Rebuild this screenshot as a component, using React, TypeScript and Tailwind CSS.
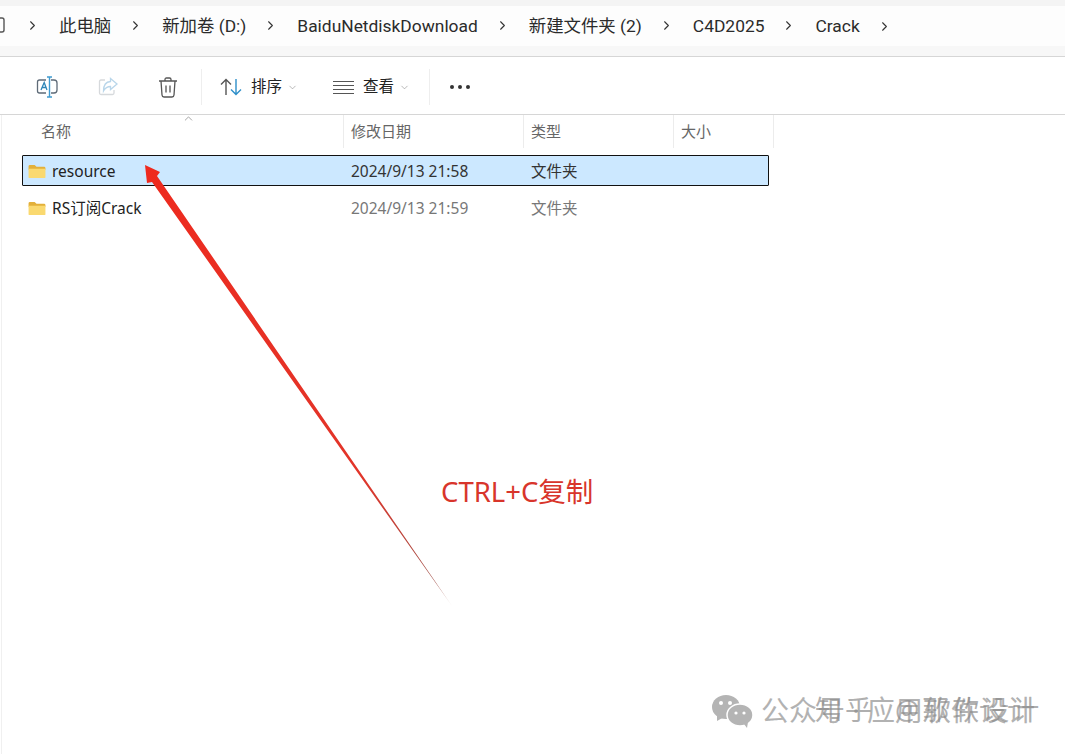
import { ChevronRight, ChevronDown, ChevronUp } from 'lucide-react'

const crumbs = ['此电脑', '新加卷 (D:)', 'BaiduNetdiskDownload', '新建文件夹 (2)', 'C4D2025', 'Crack']

const columns = [
  { label: '修改日期', width: 'w-[180px]' },
  { label: '类型', width: 'w-[150px]' },
  { label: '大小', width: 'w-[100px]' },
]

const files = [
  { name: 'resource', date: '2024/9/13 21:58', selected: true },
  { name: 'RS订阅Crack', date: '2024/9/13 21:59', selected: false },
]

function FolderIcon() {
  return (
    <svg width="18" height="15" viewBox="0 0 19 16" className="shrink-0">
      <path d="M0.5 2.5 Q0.5 1 2 1 H7 L9 3 H17 Q18.5 3 18.5 4.5 V6 H0.5 Z" fill="#e3b03a" />
      <path d="M0.5 5 H18.5 V14 Q18.5 15 17.5 15 H1.5 Q0.5 15 0.5 14 Z" fill="#fad970" />
    </svg>
  )
}

function Divider() {
  return <div className="w-px h-[36px] bg-[#eeeeee] shrink-0" />
}

function Toolbar() {
  return (
    <div className="h-[58px] flex items-center pl-[36px] pt-[3px] bg-white border-b border-[#d6d6d6]">
      <svg width="23" height="22" viewBox="0 0 23 22" fill="none" className="shrink-0">
        <path d="M10 4 H3.5 Q1.5 4 1.5 6 V15 Q1.5 17 3.5 17 H10" stroke="#5f6b78" strokeWidth="1.3" />
        <path d="M15 4 H18 Q21 4 21 7 V14 Q21 17 18 17 H15" stroke="#5f6b78" strokeWidth="1.3" />
        <path d="M5 14 L8.2 6.5 L11 14 M6 11.5 H10.2" stroke="#2f86b8" strokeWidth="1.3" />
        <path d="M13.5 1 V21 M11 1 H16 M11 21 H16" stroke="#3f9bd0" strokeWidth="1.4" />
      </svg>
      <svg width="20" height="20" viewBox="0 0 20 20" fill="none" className="ml-[39px] shrink-0">
        <path d="M7 3 H3 Q1.5 3 1.5 4.5 V16 Q1.5 17.5 3 17.5 H14.5 Q16 17.5 16 16 V13" stroke="#d6d9dc" strokeWidth="1.3" />
        <path d="M12.5 1.5 L19 7 L12.5 12.5 V9.5 Q8 9.5 5.5 14 Q5.5 5 12.5 4.5 Z" stroke="#b9d6ea" strokeWidth="1.3" />
      </svg>
      <svg width="20" height="21" viewBox="0 0 20 21" fill="none" className="ml-[40px] shrink-0">
        <path d="M1 4 H19 M7 4 V2.5 Q7 1 8.5 1 H11.5 Q13 1 13 2.5 V4" stroke="#555555" strokeWidth="1.3" />
        <path d="M3 4 L4 18 Q4.2 20 6 20 H14 Q15.8 20 16 18 L17 4" stroke="#555555" strokeWidth="1.3" />
        <path d="M8 8.5 V15.5 M12 8.5 V15.5" stroke="#555555" strokeWidth="1.3" />
      </svg>
      <div className="ml-[23px]"><Divider /></div>
      <svg width="22" height="18" viewBox="0 0 22 18" fill="none" className="ml-[18px] shrink-0">
        <path d="M6 17 V1.5 M1 6.5 L6 1.5 L11 6.5" stroke="#555555" strokeWidth="1.4" />
        <path d="M16 1 V16.5 M11 11.5 L16 16.5 L21 11.5" stroke="#2e8fc9" strokeWidth="1.4" />
      </svg>
      <span className="ml-[9px] text-[15.5px] text-[#222222]">排序</span>
      <ChevronDown size={11} strokeWidth={1.3} className="ml-[5px] text-[#8a8a8a] shrink-0" />
      <div className="ml-[35px] w-[21px] flex flex-col gap-[3px] shrink-0">
        <div className="h-px bg-[#555555]" />
        <div className="h-px bg-[#555555]" />
        <div className="h-px bg-[#555555]" />
        <div className="h-px bg-[#555555]" />
      </div>
      <span className="ml-[9px] text-[15.5px] text-[#222222]">查看</span>
      <ChevronDown size={11} strokeWidth={1.3} className="ml-[5px] text-[#8a8a8a] shrink-0" />
      <div className="ml-[19px]"><Divider /></div>
      <div className="ml-[20px] flex gap-[4px] shrink-0">
        <div className="w-[4px] h-[4px] rounded-full bg-[#333333]" />
        <div className="w-[4px] h-[4px] rounded-full bg-[#333333]" />
        <div className="w-[4px] h-[4px] rounded-full bg-[#333333]" />
      </div>
    </div>
  )
}

function FileRow({ name, date, selected }: { name: string; date: string; selected: boolean }) {
  return (
    <div
      className={
        selected
          ? 'h-[31px] w-[747px] flex items-center pt-[2px] bg-[#cce8ff] border border-[#111111] rounded-[1px]'
          : 'h-[31px] w-[747px] flex items-center pt-[2px] border border-transparent'
      }
    >
      <div className="w-[320px] flex items-center gap-[6px] pl-[5px] text-[15.5px] text-[#222222]">
        <FolderIcon />
        <span>{name}</span>
      </div>
      <div className={selected ? 'w-[180px] pl-[8px] text-[15.5px] text-[#333333]' : 'w-[180px] pl-[8px] text-[15.5px] text-[#777777]'}>{date}</div>
      <div className={selected ? 'pl-[8px] text-[15.5px] text-[#333333]' : 'pl-[8px] text-[15.5px] text-[#777777]'}>文件夹</div>
    </div>
  )
}

export default function App() {
  return (
    <div className="relative w-[1065px] h-[754px] overflow-hidden bg-white font-['Noto_Sans','Noto_Sans_CJK_SC',sans-serif]">
      <div className="h-[6px] bg-[#f4f4f4]" />
      <div className="h-[40px] flex items-center bg-[#fdfdfd] text-[17.4px] text-[#2b2b2b] -ml-[7px] font-['Roboto','Noto_Sans_CJK_SC',sans-serif]">
        <svg width="12" height="18" viewBox="0 0 12 18" fill="none" className="shrink-0 mr-[3px]">
          <path d="M1 1 H9 Q11 1 11 3 V13 Q11 15 9 15 H1" stroke="#555555" strokeWidth="1.4" />
        </svg>
        {crumbs.map((c) => (
          <div key={c} className="flex items-center">
            <ChevronRight size={15} strokeWidth={1.7} className="ml-[17px] text-[#333333] shrink-0" />
            <span className="ml-[19px] whitespace-nowrap">{c}</span>
          </div>
        ))}
        <ChevronRight size={15} strokeWidth={1.7} className="ml-[17px] text-[#333333] shrink-0" />
      </div>
      <div className="h-[10px] bg-[#f7f7f7] border-b border-[#d6d6d6] box-content" />
      <Toolbar />

      <div className="border-l border-[#f0f0f0] ml-[1px] h-[640px]">
        <div className="h-[33px] flex text-[15px] text-[#666666] relative">
          <div className="w-[342px] pl-[39px] pt-[5px] border-r border-[#ececec]">名称</div>
          {columns.map((col) => (
            <div key={col.label} className={`${col.width} pl-[7px] pt-[5px] border-r border-[#ececec]`}>{col.label}</div>
          ))}
          <ChevronUp size={13} strokeWidth={1.2} className="absolute left-[180px] -top-[3px] text-[#777777]" />
        </div>
        <div className="pl-[20px] pt-[7px] flex flex-col gap-[6px]">
          {files.map((f) => (
            <FileRow key={f.name} {...f} />
          ))}
        </div>
      </div>

      {/* red arrow annotation */}
      <svg width="1065" height="754" viewBox="0 0 1065 754" className="absolute left-0 top-0 pointer-events-none">
        <defs>
          <linearGradient id="arrowFill" gradientUnits="userSpaceOnUse" x1="145" y1="165" x2="452" y2="606">
            <stop offset="0" stopColor="#ee2a1e" />
            <stop offset="0.7" stopColor="#e2352a" />
            <stop offset="0.95" stopColor="#a0524a" />
            <stop offset="1" stopColor="#e8d8d6" />
          </linearGradient>
        </defs>
        <polygon points="145,165 160,172 157,176 452,606 152,182 147,183" fill="url(#arrowFill)" />
      </svg>

      <div className="absolute left-[441px] top-[473px] text-[27.5px] leading-[38px] text-[#d8352b] whitespace-nowrap">CTRL+C复制</div>

      {/* watermark */}
      <svg width="42" height="34" viewBox="0 0 42 34" className="absolute left-[711px] top-[694px]">
        <ellipse cx="15" cy="13" rx="14" ry="12" fill="#b4b4b4" />
        <path d="M6 21 L6 27 L13 23 Z" fill="#b4b4b4" />
        <circle cx="10" cy="9" r="2" fill="#ffffff" />
        <circle cx="19" cy="9" r="2" fill="#ffffff" />
        <ellipse cx="29" cy="21" rx="13" ry="11" fill="#b4b4b4" stroke="#ffffff" strokeWidth="1.5" />
        <path d="M33 30 L36 34 L37 28 Z" fill="#b4b4b4" />
        <circle cx="25" cy="19" r="1.6" fill="#ffffff" />
        <circle cx="33" cy="19" r="1.6" fill="#ffffff" />
      </svg>
      <div className="absolute left-[761px] top-[690px] text-[28px] leading-[40px] text-[#b2b2b2] whitespace-pre">公众号 · 应用软件设计</div>
      <div className="absolute left-[815px] top-[690px] text-[27px] leading-[40px] tracking-[3px] text-[#8c8c8c]/70 whitespace-pre">知乎  @那软设计</div>
    </div>
  )
}
